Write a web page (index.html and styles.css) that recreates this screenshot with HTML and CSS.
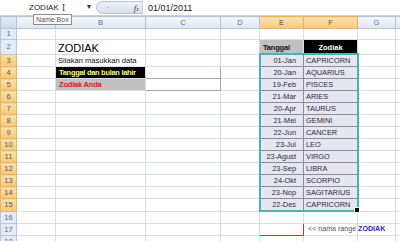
FILE: index.html
```html
<!DOCTYPE html>
<html lang="id">
<head>
    <meta charset="UTF-8">
    <title>ZODIAK</title>
    <link rel="stylesheet" href="styles.css">
</head>
<body>
    <div class="formula-bar">
        <div class="name-box">
            <span class="name-text">ZODIAK</span>
            <span class="ibeam">I</span>
            <span class="drop">&#9662;</span>
        </div>
        <div class="capsule"><span class="dots">&middot;</span><span class="fx">f<sub>x</sub></span></div>
        <div class="formula">01/01/2011</div>
    </div>

    <div class="tooltip">Name Box</div>

    <table class="sheet">
        <colgroup>
            <col class="c-rh"><col class="c-a"><col class="c-b"><col class="c-c"><col class="c-d"><col class="c-e"><col class="c-f"><col class="c-g"><col class="c-h">
        </colgroup>
        <tr class="hdr">
            <th class="corner"></th><th>A</th><th>B</th><th>C</th><th>D</th><th class="sel">E</th><th class="sel">F</th><th>G</th><th></th>
        </tr>
        <tr class="r1"><th class="rh">1</th><td></td><td></td><td></td><td></td><td></td><td></td><td></td><td></td></tr>
        <tr class="r2"><th class="rh">2</th><td></td><td class="title">ZODIAK</td><td></td><td></td><td class="th-tgl">Tanggal</td><td class="th-zod">Zodiak</td><td></td><td></td></tr>
        <tr><th class="rh sel">3</th><td></td><td class="plain">Silakan masukkan data</td><td></td><td></td><td class="dt top">01-Jan</td><td class="zn top">CAPRICORN</td><td></td><td></td></tr>
        <tr><th class="rh sel">4</th><td></td><td class="lbl-black">Tanggal dan bulan lahir</td><td class="input"></td><td></td><td class="dt">20-Jan</td><td class="zn">AQUARIUS</td><td></td><td></td></tr>
        <tr><th class="rh sel">5</th><td></td><td class="lbl-grey">Zodiak Anda</td><td class="input"></td><td></td><td class="dt">19-Feb</td><td class="zn">PISCES</td><td></td><td></td></tr>
        <tr><th class="rh sel">6</th><td></td><td></td><td></td><td></td><td class="dt">21-Mar</td><td class="zn">ARIES</td><td></td><td></td></tr>
        <tr><th class="rh sel">7</th><td></td><td></td><td></td><td></td><td class="dt">20-Apr</td><td class="zn">TAURUS</td><td></td><td></td></tr>
        <tr><th class="rh sel">8</th><td></td><td></td><td></td><td></td><td class="dt">21-Mei</td><td class="zn">GEMINI</td><td></td><td></td></tr>
        <tr><th class="rh sel">9</th><td></td><td></td><td></td><td></td><td class="dt">22-Jun</td><td class="zn">CANCER</td><td></td><td></td></tr>
        <tr><th class="rh sel">10</th><td></td><td></td><td></td><td></td><td class="dt">23-Jul</td><td class="zn">LEO</td><td></td><td></td></tr>
        <tr><th class="rh sel">11</th><td></td><td></td><td></td><td></td><td class="dt">23-Agust</td><td class="zn">VIRGO</td><td></td><td></td></tr>
        <tr><th class="rh sel">12</th><td></td><td></td><td></td><td></td><td class="dt">23-Sep</td><td class="zn">LIBRA</td><td></td><td></td></tr>
        <tr><th class="rh sel">13</th><td></td><td></td><td></td><td></td><td class="dt">24-Okt</td><td class="zn">SCORPIO</td><td></td><td></td></tr>
        <tr><th class="rh sel">14</th><td></td><td></td><td></td><td></td><td class="dt">23-Nop</td><td class="zn">SAGITARIUS</td><td></td><td></td></tr>
        <tr><th class="rh sel">15</th><td></td><td></td><td></td><td></td><td class="dt bottom">22-Des</td><td class="zn bottom last">CAPRICORN<span class="handle"></span></td><td></td><td></td></tr>
        <tr><th class="rh">16</th><td></td><td></td><td></td><td></td><td></td><td></td><td></td><td></td></tr>
        <tr><th class="rh">17</th><td></td><td></td><td></td><td></td><td class="red-box"></td><td class="note">&lt;&lt; nama range <b>ZODIAK</b></td><td></td><td></td></tr>
        <tr><th class="rh">18</th><td></td><td></td><td></td><td></td><td></td><td></td><td></td><td></td></tr>
    </table>
</body>
</html>
```

FILE: styles.css
```css
body { margin: 0; width: 400px; height: 241px; overflow: hidden; background: #fff; font-family: "Liberation Sans", Arial, sans-serif; position: relative; }

.formula-bar { display: flex; height: 15px; border-bottom: 1px solid #c6d3e3; background: #fff; font-size: 8px; color: #222; }
.name-box { width: 96px; display: flex; align-items: center; padding-left: 29px; box-sizing: border-box; position: relative; }
.ibeam { font-family: "DejaVu Serif", serif; font-size: 9px; color: #444; margin-left: 3px; }
.drop { position: absolute; left: 87px; top: 2px; font-size: 8px; color: #333; }
.capsule { width: 46px; margin: 1px 0; border-radius: 8px 0 0 8px; background: linear-gradient(#eef2f8, #d7e0ec); border: 1px solid #b9c6d8; border-right: none; display: flex; align-items: center; justify-content: space-between; padding: 0 3px 0 9px; box-sizing: border-box; }
.dots { color: #8ea0b8; font-size: 10px; }
.fx { font-family: "Liberation Serif", serif; font-style: italic; font-size: 9px; color: #444; }
.fx sub { font-size: 6px; vertical-align: 0; }
.formula { flex: 1; border-left: 1px solid #c6d3e3; padding-left: 5px; display: flex; align-items: center; font-size: 9px; }

.tooltip { position: absolute; z-index: 2; left: 33px; top: 14px; font-size: 7px; color: #555; background: #fffff8; border: 1px solid #8a8a8a; padding: 0 2px; line-height: 9px; }

.sheet { table-layout: fixed; border-collapse: collapse; width: 400px; font-size: 7.5px; }
.sheet td, .sheet th { padding: 0; height: 11px; line-height: 11px; white-space: nowrap; border: 1px solid #dadfe7; overflow: visible; }
.c-rh { width: 16px; } .c-a { width: 39px; } .c-b { width: 90px; } .c-c { width: 75px; } .c-d { width: 39px; }
.c-e { width: 44px; } .c-f { width: 54px; } .c-g { width: 38px; } .c-h { width: 5px; }

.hdr th { height: 11px; font-weight: normal; color: #5a6f8e; background: linear-gradient(#f4f7fb, #dde6f2); border: 1px solid #b5c4d8; font-size: 7.5px; }
.hdr th.sel { background: linear-gradient(#fbe3b3, #f8c77a); border-color: #e9b461; color: #3d4f6b; }
.corner { background: linear-gradient(#e3eaf4, #cfdaea) !important; }
.rh { font-weight: normal; color: #5c6f8c; background: #e4ebf6; border: 1px solid #b8c7db !important; font-size: 7.5px; text-align: center; }
.rh.sel { background: linear-gradient(#fbe0a8, #f7c978); border-color: #e6b367 !important; color: #4a5a73; }

.r1 td, .r1 th { height: 10px; line-height: 10px; }
.r2 td, .r2 th { height: 13px; }
.title { font-size: 11px; padding-left: 2px !important; color: #000; vertical-align: bottom; }
.plain { padding-left: 2px !important; color: #111; font-size: 7.6px; }
.lbl-black { background: #000; color: #ffff70; font-weight: bold; padding-left: 3px !important; letter-spacing: -0.3px; }
.lbl-grey { background: #c0c0c0; color: #e8101a; font-weight: bold; padding-left: 3px !important; letter-spacing: -0.2px; }
.input { border: 1px solid #a6a6a6 !important; background: #fff; }

.th-tgl { background: #c0c0c0; font-weight: bold; color: #111; padding-left: 3px !important; vertical-align: bottom; letter-spacing: -0.2px; }
.th-zod { background: #000; color: #fff; font-weight: bold; text-align: center; vertical-align: bottom; }

.dt, .zn { background: #e6e6f0; color: #2a2a3a; border: 1px solid #8a8aa8 !important; font-size: 7.4px; }
.dt { text-align: right; padding-right: 7px !important; border-left: 2px solid #4eb3ae !important; }
.zn { padding-left: 2px !important; border-right: 2px solid #4eb3ae !important; position: relative; }
.top { border-top: 2px solid #4eb3ae !important; }
.bottom { border-bottom: 2px solid #4eb3ae !important; }
.handle { position: absolute; right: -3px; bottom: -3px; width: 4px; height: 4px; background: #000; border: 1px solid #fff; }

.red-box { border: 1px solid #c8323c !important; }
.note { color: #555; padding-left: 4px !important; font-size: 7.1px; }
.note b { color: #2a2ac8; }
```
